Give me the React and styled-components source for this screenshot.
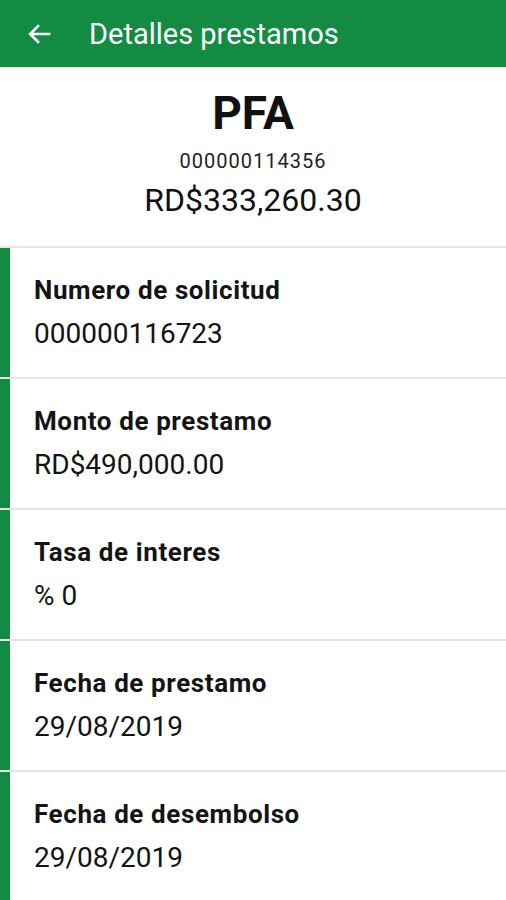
import React from 'react'
import { styled, createGlobalStyle } from 'styled-components'

const GlobalStyle = createGlobalStyle`
  html, body {
    margin: 0;
    padding: 0;
    background: #ffffff;
    font-family: Roboto, "Noto Sans", Arial, sans-serif;
  }
`

const Page = styled.div`
  width: 506px;
  min-height: 900px;
  background: #ffffff;
`

const Header = styled.header`
  height: 67px;
  background: #138b43;
  display: flex;
  align-items: center;
  padding-left: 27px;
  box-sizing: border-box;
  color: #ffffff;
  box-shadow: 0 1px 2px rgba(0, 0, 0, 0.15);
`

const Back = styled.button`
  border: none;
  background: none;
  padding: 0;
  margin-right: 38px;
  display: flex;
  align-items: center;
  cursor: pointer;
`

const Title = styled.h1`
  margin: 0;
  font-size: 29px;
  font-weight: 400;
  line-height: 34px;
`

const Summary = styled.section`
  height: 179px;
  box-sizing: border-box;
  padding-top: 20px;
  display: flex;
  flex-direction: column;
  align-items: center;
  color: #111111;
`

const Code = styled.div`
  font-size: 46px;
  font-weight: 700;
  line-height: 52px;
`

const Account = styled.div`
  margin-top: 10px;
  font-size: 20px;
  letter-spacing: 1px;
  line-height: 24px;
  color: #222222;
`

const Balance = styled.div`
  margin-top: 9px;
  font-size: 32px;
  line-height: 37px;
`

const List = styled.div`
  display: flex;
  flex-direction: column;
  gap: 2px;
  border-top: 2px solid #e6e6e6;
  background: #e6e6e6;
`

const Item = styled.div`
  height: 129px;
  box-sizing: border-box;
  background: #ffffff;
  border-left: 10px solid #138b43;
  padding: 27px 0 0 24px;
  color: #141414;
`

const Label = styled.div`
  font-size: 26px;
  font-weight: 700;
  letter-spacing: 0.6px;
  line-height: 30px;
`

const Value = styled.div`
  margin-top: 12px;
  font-size: 28px;
  line-height: 34px;
`

const items = [
  { label: 'Numero de solicitud', value: '000000116723' },
  { label: 'Monto de prestamo', value: 'RD$490,000.00' },
  { label: 'Tasa de interes', value: '% 0' },
  { label: 'Fecha de prestamo', value: '29/08/2019' },
  { label: 'Fecha de desembolso', value: '29/08/2019' },
]

const App = () => {
  return (
    <Page>
      <GlobalStyle />
      <Header>
        <Back aria-label="Volver">
          <svg width="24" height="20" viewBox="0 0 24 20" fill="none">
            <path d="M22 10H3.5M11 2.2L3.2 10l7.8 7.8" stroke="#ffffff" strokeWidth="2.6" strokeLinecap="square" />
          </svg>
        </Back>
        <Title>Detalles prestamos</Title>
      </Header>
      <Summary>
        <Code>PFA</Code>
        <Account>000000114356</Account>
        <Balance>RD$333,260.30</Balance>
      </Summary>
      <List>
        {items.map((it) => (
          <Item key={it.label}>
            <Label>{it.label}</Label>
            <Value>{it.value}</Value>
          </Item>
        ))}
      </List>
    </Page>
  )
}

export default App
